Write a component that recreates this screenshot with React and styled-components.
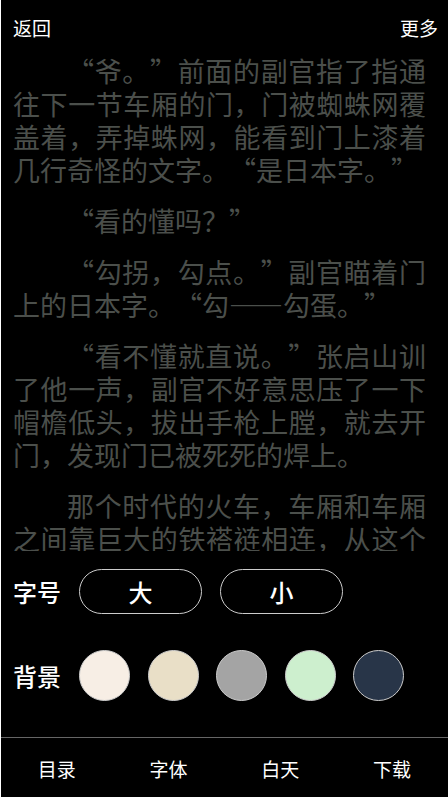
import React, { useState } from "react";
import styled, { createGlobalStyle } from "styled-components";

const GlobalStyle = createGlobalStyle`
  *, *::before, *::after { box-sizing: border-box; }
  body {
    margin: 0;
    background: #000;
    font-family: "Noto Sans CJK SC", sans-serif;
  }
`;

const Page = styled.div`
  display: flex;
  flex-direction: column;
  height: 100vh;
  overflow: hidden;
  background: #000;
  color: #fff;
  border-left: 1px solid #fff;
`;

const TopBar = styled.header`
  display: flex;
  flex: none;
  align-items: center;
  justify-content: space-between;
  height: 54px;
  padding: 2px 10px 0 12px;
`;

const TextButton = styled.button`
  padding: 0;
  border: 0;
  background: none;
  color: inherit;
  font-family: inherit;
  font-size: 19px;
  line-height: 28px;
  cursor: pointer;
`;

const Reader = styled.main`
  flex: 1;
  min-height: 0;
  overflow: hidden;
  padding: 0 22px 0 12px;
  color: #4b4f4b;
  font-size: 27px;
  font-weight: 400;
  line-height: 33px;
  text-align: justify;
  text-spacing-trim: space-all;
`;

const Paragraph = styled.p`
  margin: 0 0 18px;
  text-indent: 2em;
  text-align-last: ${(p) => (p.$continues ? "justify" : "auto")};
`;

const Settings = styled.section`
  display: flex;
  flex: none;
  flex-direction: column;
  gap: 36px;
  padding: 18px 12px 36px;
`;

const SettingRow = styled.div`
  display: flex;
  align-items: center;
  gap: 18px;
`;

const SettingName = styled.span`
  flex: none;
  font-size: 24px;
  font-weight: 500;
  line-height: 36px;
`;

const SizeButton = styled.button`
  width: 123px;
  height: 45px;
  padding: 0;
  border: 1px solid #ccc;
  border-radius: 24px;
  background: transparent;
  color: inherit;
  font-family: inherit;
  font-size: 24px;
  font-weight: 500;
  line-height: 36px;
  cursor: pointer;
`;

const Swatches = styled.div`
  display: flex;
  flex: 1;
  justify-content: space-between;
  max-width: 325px;
`;

const Swatch = styled.input`
  appearance: none;
  width: 51px;
  height: 51px;
  margin: 0;
  border: 1px solid #ccc;
  border-radius: 50%;
  background: ${(p) => p.$color};
  cursor: pointer;
`;

const BottomNav = styled.nav`
  display: grid;
  flex: none;
  grid-template-columns: repeat(4, 1fr);
  height: 60px;
  padding-top: 2px;
  border-top: 1px solid #666;
`;

const paragraphs = [
  { text: "“爷。”前面的副官指了指通往下一节车厢的门，门被蜘蛛网覆盖着，弄掉蛛网，能看到门上漆着几行奇怪的文字。“是日本字。”" },
  { text: "“看的懂吗？”" },
  { text: "“勾拐，勾点。”副官瞄着门上的日本字。“勾——勾蛋。”" },
  { text: "“看不懂就直说。”张启山训了他一声，副官不好意思压了一下帽檐低头，拔出手枪上膛，就去开门，发现门已被死死的焊上。" },
  { text: "那个时代的火车，车厢和车厢之间靠巨大的铁褡裢相连，从这个", continues: true },
];

const backgrounds = [
  { name: "米白", color: "#f7eee5" },
  { name: "浅黄", color: "#e9dfc7" },
  { name: "灰色", color: "#a4a4a4" },
  { name: "浅绿", color: "#cdefce" },
  { name: "深蓝", color: "#283548" },
];

const navItems = ["目录", "字体", "白天", "下载"];

export default function App() {
  const [background, setBackground] = useState("");

  return (
    <Page lang="zh-CN">
      <GlobalStyle />
      <TopBar>
        <TextButton type="button">返回</TextButton>
        <TextButton type="button">更多</TextButton>
      </TopBar>
      <Reader>
        {paragraphs.map(({ text, continues }) => (
          <Paragraph key={text} $continues={continues}>
            {text}
          </Paragraph>
        ))}
      </Reader>
      <Settings>
        <SettingRow role="group" aria-labelledby="size-name">
          <SettingName id="size-name">字号</SettingName>
          <SizeButton type="button">大</SizeButton>
          <SizeButton type="button">小</SizeButton>
        </SettingRow>
        <SettingRow role="radiogroup" aria-labelledby="background-name">
          <SettingName id="background-name">背景</SettingName>
          <Swatches>
            {backgrounds.map(({ name, color }) => (
              <Swatch
                key={name}
                type="radio"
                name="background"
                aria-label={name}
                checked={background === name}
                onChange={() => setBackground(name)}
                $color={color}
              />
            ))}
          </Swatches>
        </SettingRow>
      </Settings>
      <BottomNav>
        {navItems.map((label) => (
          <TextButton type="button" key={label}>
            {label}
          </TextButton>
        ))}
      </BottomNav>
    </Page>
  );
}
